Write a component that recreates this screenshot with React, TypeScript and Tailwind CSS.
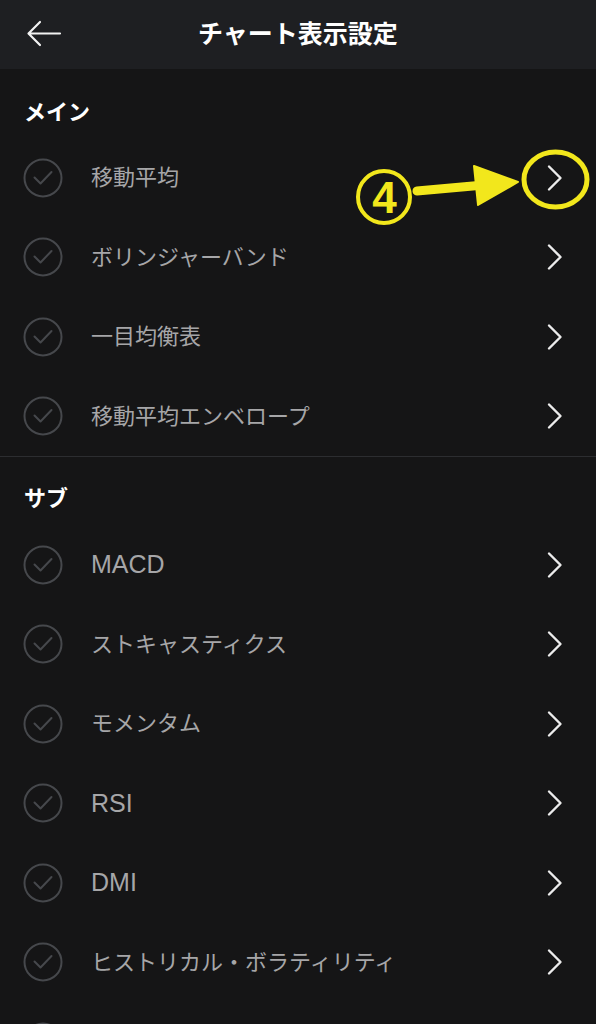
const MAIN = ["移動平均", "ボリンジャーバンド", "一目均衡表", "移動平均エンベロープ"];
const SUB = [
  "MACD",
  "ストキャスティクス",
  "モメンタム",
  "RSI",
  "DMI",
  "ヒストリカル・ボラティリティ",
];

const FONT = "font-['Liberation_Sans','Noto_Sans_CJK_JP',sans-serif]";

// Latin-only labels render larger in the original (system font metrics).
function isLatin(s: string) {
  return /^[A-Za-z0-9 ]+$/.test(s);
}

function CheckCircle() {
  return (
    <svg width="40" height="40" viewBox="0 0 40 40" className="shrink-0">
      <circle cx="20" cy="20" r="18.5" fill="none" stroke="#46484c" strokeWidth="2" />
      <path d="M11.5 19.5 L17.5 25.5 L28.5 14" fill="none" stroke="#46484c" strokeWidth="2" strokeLinecap="round" strokeLinejoin="round" />
    </svg>
  );
}

function Chevron() {
  return (
    <svg width="18" height="28" viewBox="0 0 18 28" className="shrink-0">
      <path d="M3 2.5 L14.5 14 L3 25.5" fill="none" stroke="#ececec" strokeWidth="2.4" strokeLinecap="round" strokeLinejoin="round" />
    </svg>
  );
}

function Row({ label }: { label?: string }) {
  return (
    <div className="flex h-[79.5px] items-center pl-[23px] pr-[32px]">
      <CheckCircle />
      <span
        className={`ml-[28px] flex-1 text-[#a6a6a8] ${label && isLatin(label) ? "text-[25px]" : "text-[22px]"}`}
      >
        {label}
      </span>
      <Chevron />
    </div>
  );
}

function Annotation() {
  return (
    <svg className="pointer-events-none absolute left-0 top-0" width="596" height="260" viewBox="0 0 596 260">
      <ellipse cx="555.5" cy="179.5" rx="31.5" ry="27.5" fill="none" stroke="#f2e71c" strokeWidth="5" />
      <circle cx="384" cy="197" r="26" fill="none" stroke="#f2e71c" strokeWidth="4" />
      <text
        x="384.5"
        y="213"
        textAnchor="middle"
        fontSize="44"
        fontWeight="700"
        fill="#f2e71c"
        fontFamily="Liberation Sans, Arial, sans-serif"
      >
        4
      </text>
      <path d="M417 191 L484 185" stroke="#f2e71c" strokeWidth="9" strokeLinecap="round" />
      <path d="M474 166 L518 182 L478 205 Z" fill="#f2e71c" stroke="#f2e71c" strokeWidth="2" strokeLinejoin="round" />
    </svg>
  );
}

export default function App() {
  return (
    <div className={`relative h-[1024px] w-[596px] overflow-hidden bg-[#151516] ${FONT}`}>
      <header className="relative flex h-[69px] items-center justify-center bg-[#1e1f22]">
        <svg className="absolute left-[26px] top-[20px]" width="36" height="27" viewBox="0 0 36 27">
          <path d="M34 13.5 H3 M14 2 L2.5 13.5 L14 25" fill="none" stroke="#f2f2f2" strokeWidth="2.2" strokeLinecap="round" strokeLinejoin="round" />
        </svg>
        <h1 className="text-[25px] font-bold text-white">チャート表示設定</h1>
      </header>

      <div className="pl-[24px] pt-[28px] pb-[9px] text-[22px] leading-[32px] font-bold text-white">メイン</div>
      {MAIN.map((m) => (
        <Row key={m} label={m} />
      ))}

      <div className="h-px bg-[#2c2d30]" />

      <div className="pl-[24px] pt-[26px] pb-[10px] text-[22px] leading-[32px] font-bold text-white">サブ</div>
      {SUB.map((s) => (
        <Row key={s} label={s} />
      ))}
      {/* next row, scrolled out of view below the fold */}
      <Row />

      <Annotation />
    </div>
  );
}
